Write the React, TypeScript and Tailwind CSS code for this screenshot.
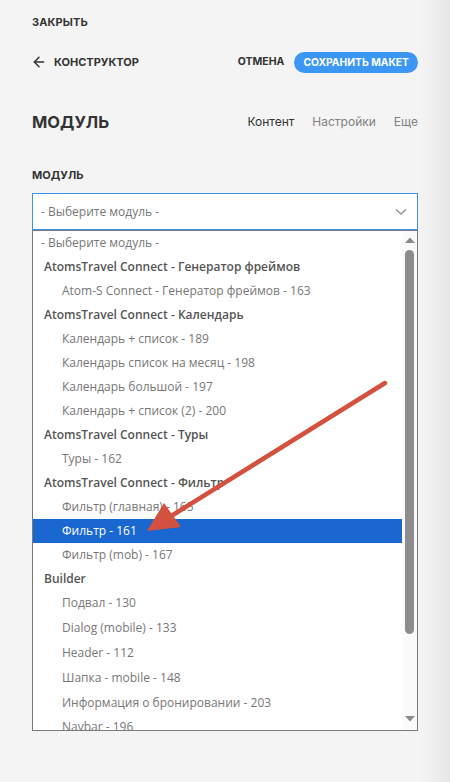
import React from "react";
import { ArrowLeft } from "lucide-react";

type Row = { t: string; kind: "first" | "group" | "opt"; sel?: boolean };

const rows: Row[] = [
  { t: "- Выберите модуль -", kind: "first" },
  { t: "AtomsTravel Connect - Генератор фреймов", kind: "group" },
  { t: "Atom-S Connect - Генератор фреймов - 163", kind: "opt" },
  { t: "AtomsTravel Connect - Календарь", kind: "group" },
  { t: "Календарь + список - 189", kind: "opt" },
  { t: "Календарь список на месяц - 198", kind: "opt" },
  { t: "Календарь большой - 197", kind: "opt" },
  { t: "Календарь + список (2) - 200", kind: "opt" },
  { t: "AtomsTravel Connect - Туры", kind: "group" },
  { t: "Туры - 162", kind: "opt" },
  { t: "AtomsTravel Connect - Фильтр", kind: "group" },
  { t: "Фильтр (главная) - 165", kind: "opt" },
  { t: "Фильтр - 161", kind: "opt", sel: true },
  { t: "Фильтр (mob) - 167", kind: "opt" },
  { t: "Builder", kind: "group" },
  { t: "Подвал - 130", kind: "opt" },
  { t: "Dialog (mobile) - 133", kind: "opt" },
  { t: "Header - 112", kind: "opt" },
  { t: "Шапка - mobile - 148", kind: "opt" },
  { t: "Информация о бронировании - 203", kind: "opt" },
  { t: "Navbar - 196", kind: "opt" },
];

const head = { fontFamily: "Inter, 'Noto Sans', sans-serif" };
const list = { fontFamily: "'Open Sans', 'Noto Sans', sans-serif" };

export default function App() {
  return (
    <div className="relative w-[450px] h-[782px] overflow-hidden bg-[#f4f4f4]">
      <div className="px-[32px] pt-[15px]" style={head}>
        <div className="h-[14px] flex items-center text-[11px] font-bold text-[#333] tracking-[0.1px]">
          ЗАКРЫТЬ
        </div>

        <div className="mt-[22px] h-[22px] flex items-center justify-between">
          <div className="flex items-center gap-[7px] text-[#333]">
            <ArrowLeft size={16} strokeWidth={2.2} className="-ml-[1px]" />
            <span className="text-[11px] font-bold">КОНСТРУКТОР</span>
          </div>
          <div className="flex items-center gap-[10px]">
            <span className="text-[10.5px] font-bold text-[#333]">ОТМЕНА</span>
            <button className="h-[21px] px-[9px] rounded-full bg-[#3b97f3] text-white text-[10.3px] font-bold leading-none flex items-center">
              СОХРАНИТЬ МАКЕТ
            </button>
          </div>
        </div>

        <div className="mt-[38px] h-[22px] flex items-center justify-between">
          <span className="text-[16.5px] font-bold text-[#333]">МОДУЛЬ</span>
          <div className="flex items-center gap-[18px] text-[12px]">
            <span className="text-[#333]">Контент</span>
            <span className="text-[#808080]">Настройки</span>
            <span className="text-[#808080]">Еще</span>
          </div>
        </div>

        <div className="mt-[35px] h-[14px] flex items-center text-[11px] font-bold text-[#333]">
          МОДУЛЬ
        </div>

        <div
          className="mt-[11px] h-[37px] bg-white border border-[#3d92ec] flex items-center justify-between pl-[8px] pr-[10px]"
          style={list}
        >
          <span className="text-[12px] text-[#777]">- Выберите модуль -</span>
          <svg width="12" height="8" viewBox="0 0 12 8">
            <path d="M1 1.5 L6 6 L11 1.5" fill="none" stroke="#999" strokeWidth="1.6" />
          </svg>
        </div>

        <div className="h-[501px] bg-white border border-[#7a7a7a] flex overflow-hidden" style={list}>
          <div className="flex-1 overflow-hidden">
            {rows.map((r, i) => (
              <div
                key={i}
                className={
                  "flex items-center text-[12px] whitespace-nowrap " +
                  (i >= 15 ? "h-[24.8px] " : "h-[24px] ") +
                  (r.sel
                    ? "bg-[#1a67d2] text-white pl-[29px]"
                    : r.kind === "group"
                    ? "text-[#555] font-semibold pl-[11px]"
                    : r.kind === "first"
                    ? "text-[#777] pl-[8px]"
                    : "text-[#777] pl-[29px]")
                }
              >
                {r.t}
              </div>
            ))}
          </div>
          <div className="w-[15px] bg-[#fafafa] flex flex-col items-center">
            <svg width="10" height="6" viewBox="0 0 10 6" className="mt-[6px]">
              <path d="M0 6 L5 0.5 L10 6 Z" fill="#8a8a8a" />
            </svg>
            <div className="mt-[7px] w-[9px] h-[384px] rounded-full bg-[#8c8c8c]" />
            <div className="flex-1" />
            <svg width="10" height="6" viewBox="0 0 10 6" className="mb-[8px]">
              <path d="M0 0 L10 0 L5 5.5 Z" fill="#8a8a8a" />
            </svg>
          </div>
        </div>
      </div>

      <div className="pointer-events-none absolute top-0 right-0 h-full w-[30px] bg-gradient-to-r from-transparent to-[#e6e6e6]" />

      <svg
        className="pointer-events-none absolute inset-0"
        width="450"
        height="782"
        viewBox="0 0 450 782"
      >
        <line x1="385" y1="383" x2="168" y2="518" stroke="#d4503f" strokeWidth="4.5" strokeLinecap="round" />
        <polygon points="147,531 164,503 181,527" fill="#d4503f" />
      </svg>
    </div>
  );
}
